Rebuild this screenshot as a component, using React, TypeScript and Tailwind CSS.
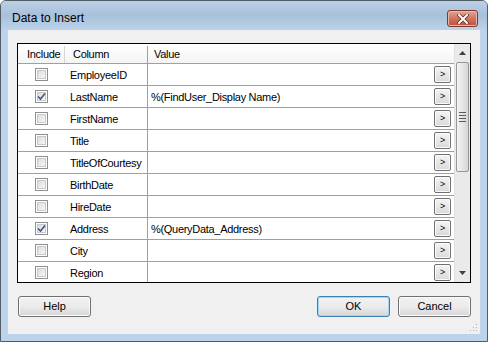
const rows = [
  { name: 'EmployeeID', checked: false, value: '' },
  { name: 'LastName', checked: true, value: '%(FindUser_Display Name)' },
  { name: 'FirstName', checked: false, value: '' },
  { name: 'Title', checked: false, value: '' },
  { name: 'TitleOfCourtesy', checked: false, value: '' },
  { name: 'BirthDate', checked: false, value: '' },
  { name: 'HireDate', checked: false, value: '' },
  { name: 'Address', checked: true, value: '%(QueryData_Address)' },
  { name: 'City', checked: false, value: '' },
  { name: 'Region', checked: false, value: '' },
];

function CheckBox({ checked }: { checked: boolean }) {
  return (
    <div className="w-[13px] h-[13px] border border-[#8f8f8f] bg-white p-[1px]">
      <div className="relative w-full h-full bg-gradient-to-br from-[#dcdcdc] to-[#f8f8f8] border border-[#c8c8c8]">
        {checked && (
          <svg className="absolute left-[-1px] top-[-1px]" width="9" height="9" viewBox="0 0 9 9">
            <path d="M1 4.5 L3.5 7 L8 1.5" fill="none" stroke="#3f5488" strokeWidth="1.6" />
          </svg>
        )}
      </div>
    </div>
  );
}

function WinButton({ label, primary }: { label: string; primary?: boolean }) {
  return (
    <div
      className={`w-[73px] h-[21px] rounded-[3px] border flex items-center justify-center text-[11px] text-black bg-gradient-to-b from-[#f2f2f2] via-[#ebebeb] to-[#d6d6d6] ${
        primary ? 'border-[#3c7fb1] shadow-[inset_0_0_0_1px_#9ed8f5]' : 'border-[#707070] shadow-[inset_0_0_0_1px_#fbfbfb]'
      }`}
    >
      {label}
    </div>
  );
}

export default function App() {
  return (
    <div className="w-[488px] h-[342px] bg-white font-['Liberation_Sans',sans-serif]">
      <div className="w-full h-full flex flex-col rounded-t-[6px] border border-[#525c66] bg-[#bcd3eb]">
        {/* Title bar */}
        <div className="h-[29px] flex items-start justify-between pl-[11px] pr-[9px] rounded-t-[5px] bg-gradient-to-b from-[#bcd0e6] via-[#a9c0da] to-[#bcd3eb]">
          <span className="mt-[10px] text-[12px] leading-[14px] text-black">Data to Insert</span>
          <div className="mt-[9px] w-[31px] h-[17px] rounded-[3px] border border-[#7c3a2f] bg-gradient-to-b from-[#e4a595] via-[#d2735f] to-[#c0503a] shadow-[inset_0_0_0_1px_#eab8ab] flex items-center justify-center">
            <svg width="12" height="10" viewBox="0 0 12 10">
              <path d="M2 1 L10 9 M10 1 L2 9" stroke="#5b2a20" strokeWidth="3.4" strokeLinecap="square" />
              <path d="M2 1 L10 9 M10 1 L2 9" stroke="#ffffff" strokeWidth="2" strokeLinecap="square" />
            </svg>
          </div>
        </div>

        {/* Client area */}
        <div className="flex-1 mx-[7px] mb-[7px] bg-[#f0f0f0] pt-[13px] px-[9px] flex flex-col text-[11px] text-black relative">
          {/* Grid */}
          <div className="h-[240px] border border-black bg-white flex overflow-hidden tracking-[-0.3px]">
            <div className="flex-1 flex flex-col">
              <div className="h-[20px] flex border-b border-[#a0a0a0] bg-gradient-to-b from-white to-[#f4f4f4] pt-[2px]">
                <div className="w-[47px] pl-[9px] flex items-center border-r border-[#d5d5d5]">Include</div>
                <div className="w-[83px] pl-[8px] flex items-center border-r border-[#a0a0a0]">Column</div>
                <div className="flex-1 pl-[6px] flex items-center">Value</div>
              </div>
              {rows.map((r) => (
                <div key={r.name} className="h-[22px] shrink-0 flex border-b border-[#a0a0a0]">
                  <div className="w-[47px] pl-[17px] flex items-center">
                    <CheckBox checked={r.checked} />
                  </div>
                  <div className="w-[83px] pl-[5px] pt-[2px] flex items-center border-r border-[#a0a0a0]">{r.name}</div>
                  <div className="flex-1 pl-[3px] pr-[3px] flex items-center justify-between">
                    <span className="pt-[2px]">{r.value}</span>
                    <div className="w-[17px] h-[17px] rounded-[2px] border border-[#707070] bg-gradient-to-b from-[#f4f4f4] to-[#d9d9d9] shadow-[inset_0_0_0_1px_#fcfcfc] flex items-center justify-center text-[9px] leading-none">
                      &gt;
                    </div>
                  </div>
                </div>
              ))}
            </div>
            {/* Scrollbar */}
            <div className="w-[16px] bg-[#eaeaea] border-l border-[#e0e0e0] flex flex-col">
              <div className="h-[18px] flex items-center justify-center">
                <svg width="7" height="4" viewBox="0 0 7 4">
                  <path d="M0 4 L3.5 0 L7 4 Z" fill="#404040" />
                </svg>
              </div>
              <div className="mx-[1px] h-[110px] rounded-[2px] border border-[#979797] bg-gradient-to-r from-[#f3f3f3] via-[#e6e6e6] to-[#d4d4d4] flex flex-col items-center justify-center gap-[2px]">
                <div className="w-[7px] h-[1px] bg-[#5a5a5a]" />
                <div className="w-[7px] h-[1px] bg-[#5a5a5a]" />
                <div className="w-[7px] h-[1px] bg-[#5a5a5a]" />
                <div className="w-[7px] h-[1px] bg-[#5a5a5a]" />
              </div>
              <div className="flex-1" />
              <div className="h-[18px] flex items-center justify-center">
                <svg width="7" height="4" viewBox="0 0 7 4">
                  <path d="M0 0 L3.5 4 L7 0 Z" fill="#404040" />
                </svg>
              </div>
            </div>
          </div>

          {/* Buttons */}
          <div className="mt-[13px] flex items-center">
            <div className="ml-[1px]">
              <WinButton label="Help" />
            </div>
            <div className="flex-1" />
            <div className="flex gap-[8px]">
              <WinButton label="OK" primary />
              <WinButton label="Cancel" />
            </div>
          </div>

          {/* Resize grip */}
          <svg className="absolute right-[2px] bottom-[2px]" width="8" height="8" viewBox="0 0 8 8">
            <g fill="#b0b0b0">
              <rect x="6" y="0" width="1" height="1" />
              <rect x="3" y="3" width="1" height="1" />
              <rect x="6" y="3" width="1" height="1" />
              <rect x="0" y="6" width="1" height="1" />
              <rect x="3" y="6" width="1" height="1" />
              <rect x="6" y="6" width="1" height="1" />
            </g>
          </svg>
        </div>
      </div>
    </div>
  );
}
